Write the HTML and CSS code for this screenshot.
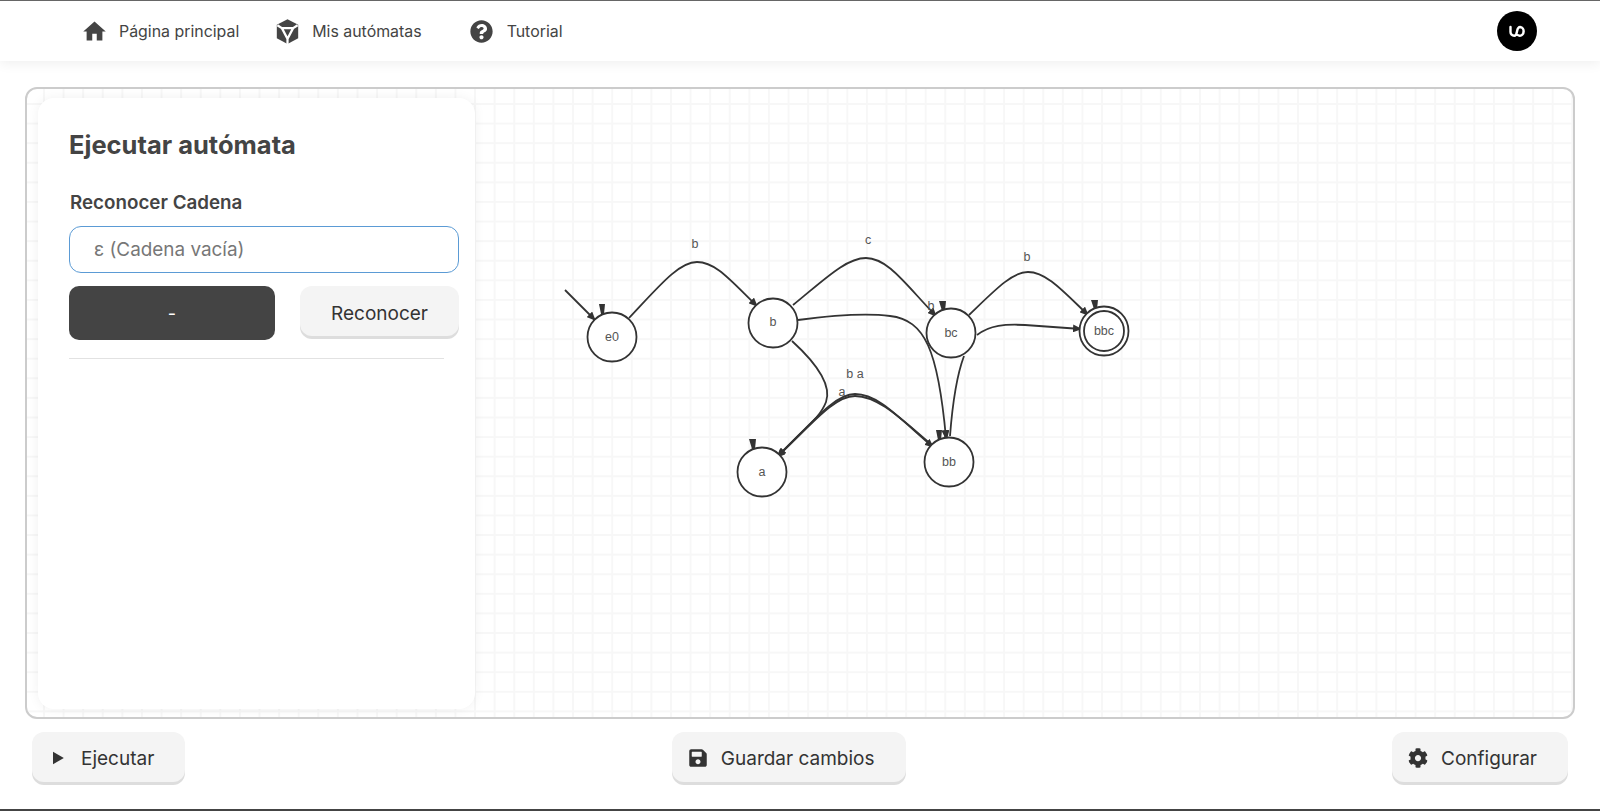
FILE: index.html
```html
<!DOCTYPE html>
<html>
<head>
  <title>Ejecutar autómata</title>
  <link rel="stylesheet" href="styles.css">
</head>
<body>
  <header class="topbar">
    <nav class="nav">
      <a class="nav-item nav-home">
        <svg class="nav-icon" viewBox="0 0 24 24"><path d="M10 20v-6h4v6h5v-8h3L12 3 2 12h3v8z"/></svg>
        Página principal
      </a>
      <a class="nav-item nav-automata">
        <svg class="nav-icon" viewBox="0 0 24 24"><path d="M12 1 21.5 6v12L12 23 2.500 18V6z"/><path class="cut" d="M3 6.500 7 9H17L21 6.500M7 9 12 18.500 17 9M12 18.500V23"/></svg>
        Mis autómatas
      </a>
      <a class="nav-item nav-tutorial">
        <svg class="nav-icon" viewBox="0 0 512 512"><path d="M504 256c0 136.997-111.043 248-248 248S8 392.997 8 256C8 119.083 119.043 8 256 8s248 111.083 248 248zM262.655 90c-54.497 0-89.255 22.957-116.549 63.758-3.536 5.286-2.353 12.415 2.715 16.258l34.699 26.31c5.205 3.947 12.621 3.008 16.665-2.122 17.864-22.658 30.113-35.797 57.303-35.797 20.429 0 45.698 13.148 45.698 32.958 0 14.976-12.363 22.667-32.534 33.976C247.128 238.528 216 254.941 216 296v4c0 6.627 5.373 12 12 12h56c6.627 0 12-5.373 12-12v-1.333c0-28.462 83.186-29.647 83.186-106.667 0-58.002-60.165-102-116.531-102zM256 338c-25.365 0-46 20.635-46 46 0 25.364 20.635 46 46 46s46-20.636 46-46c0-25.365-20.635-46-46-46z"/></svg>
        Tutorial
      </a>
    </nav>
    <div class="avatar">
      <svg viewBox="0 0 24 24"><path d="M5.500 8v5a3.700 3.700 0 0 0 3.700 3.700c1.800 0 2.300-1.200 2.800-4.200s1.200-4.500 3.200-4.500a3.800 3.800 0 0 1 3.300 4.700 3.700 3.700 0 0 1-6 3.200"/></svg>
    </div>
  </header>

  <main class="workspace">
    <section class="panel">
      <h2>Ejecutar autómata</h2>
      <label class="field-label" for="cadena">Reconocer Cadena</label>
      <input class="field-input" id="cadena" type="text" placeholder="ε (Cadena vacía)">
      <div class="panel-actions">
        <button class="btn-dark">-</button>
        <button class="btn btn-recognize">Reconocer</button>
      </div>
      <hr class="divider">
    </section>

    <svg class="graph" viewBox="0 0 1600 811">
      <defs>
        <marker id="arrow" markerWidth="9" markerHeight="8" refX="8" refY="4" orient="auto" markerUnits="userSpaceOnUse">
          <path d="M0 0 9 4 0 8z" fill="#333"/>
        </marker>
      </defs>

      <g class="edges">
        <path marker-end="url(#arrow)" d="M565 290 595 320"/>
        <path marker-end="url(#arrow)" d="M629 318C660 285 679 262 697 262C716 262 731 281 757 306"/>
        <path marker-end="url(#arrow)" d="M793 305C825 279 846 258 866 258C888 258 906 285 936 316"/>
        <path marker-end="url(#arrow)" d="M798 320C835 315 868 313 890 316C925 320 938 350 946 438"/>
        <path marker-end="url(#arrow)" d="M792 341C815 362 832 385 826 402C820 418 805 428 778 456"/>
        <path marker-end="url(#arrow)" d="M778 456C810 425 834 394 855 394C878 394 898 417 933 447"/>
        <path marker-end="url(#arrow)" d="M933 446C900 418 878 396 855 396C834 396 812 424 777 457"/>
        <path d="M964 356C955 380 952 410 950 436"/>
        <path marker-end="url(#arrow)" d="M969 315C995 290 1012 272 1028 272C1046 272 1062 290 1088 315"/>
        <path marker-end="url(#arrow)" d="M977 335C990 325 1005 324 1025 325L1081 329"/>
      </g>

      <g class="flags">
        <path d="M599 304H605L604 314H601z"/>
        <path d="M749 439H756L755 449H752z"/>
        <path d="M939 301H946L945 311H942z"/>
        <path d="M1091 300H1098L1097 309H1094z"/>
        <path d="M936 430H942L941 440H938z"/>
        <path d="M943 431H949L947 440H945z"/>
      </g>

      <g class="nodes">
        <circle cx="612" cy="337" r="24.500"/>
        <circle cx="773" cy="323" r="24.500"/>
        <circle cx="762" cy="472" r="24.500"/>
        <circle cx="951" cy="333" r="24.500"/>
        <circle cx="949" cy="462" r="24.500"/>
        <circle cx="1104" cy="331" r="24.500"/>
        <circle cx="1104" cy="331" r="20"/>
      </g>

      <g class="labels">
        <text x="612" y="341">e0</text>
        <text x="773" y="326">b</text>
        <text x="762" y="476">a</text>
        <text x="951" y="337">bc</text>
        <text x="949" y="466">bb</text>
        <text x="1104" y="335">bbc</text>
        <text x="695" y="248">b</text>
        <text x="868" y="244">c</text>
        <text x="1027" y="261">b</text>
        <text x="931" y="310">b</text>
        <text x="855" y="378">b a</text>
        <text x="842" y="396">a</text>
      </g>
    </svg>
  </main>

  <footer class="toolbar">
    <button class="btn btn-tool">
      <svg class="tool-icon" viewBox="0 0 24 24"><path d="M6 4.500v15L19 12z"/></svg>
      Ejecutar
    </button>
    <button class="btn btn-tool">
      <svg class="tool-icon" viewBox="0 0 448 512"><path d="M433.941 129.941l-83.882-83.882A48 48 0 0 0 316.118 32H48C21.49 32 0 53.49 0 80v352c0 26.51 21.49 48 48 48h352c26.51 0 48-21.49 48-48V163.882a48 48 0 0 0-14.059-33.941zM224 416c-35.346 0-64-28.654-64-64 0-35.346 28.654-64 64-64s64 28.654 64 64c0 35.346-28.654 64-64 64zm96-304.520V212c0 6.627-5.373 12-12 12H76c-6.627 0-12-5.373-12-12V108c0-6.627 5.373-12 12-12h228.520c3.183 0 6.235 1.264 8.485 3.515l3.480 3.480A11.996 11.996 0 0 1 320 111.480z"/></svg>
      Guardar cambios
    </button>
    <button class="btn btn-tool">
      <svg class="tool-icon" viewBox="0 0 512 512"><path d="M487.4 315.7l-42.6-24.6c4.3-23.2 4.3-47 0-70.2l42.6-24.6c4.9-2.8 7.1-8.6 5.500-14-11.100-35.600-30-67.800-54.700-94.600-3.800-4.100-10-5.100-14.800-2.300L380.800 110c-17.900-15.400-38.500-27.300-60.800-35.100V25.800c0-5.600-3.900-10.500-9.400-11.700-36.700-8.200-74.300-7.800-109.200 0-5.500 1.200-9.400 6.100-9.400 11.700V75c-22.200 7.900-42.800 19.800-60.800 35.100L88.700 85.500c-4.900-2.800-11-1.900-14.800 2.300-24.700 26.700-43.600 58.900-54.700 94.600-1.700 5.400.6 11.200 5.500 14L67.300 221c-4.300 23.200-4.300 47 0 70.200l-42.600 24.600c-4.900 2.800-7.100 8.600-5.500 14 11.100 35.600 30 67.800 54.700 94.600 3.800 4.100 10 5.100 14.800 2.300l42.600-24.600c17.900 15.400 38.500 27.300 60.800 35.100v49.200c0 5.600 3.900 10.500 9.400 11.700 36.700 8.200 74.300 7.800 109.200 0 5.500-1.200 9.400-6.100 9.400-11.700v-49.200c22.200-7.900 42.800-19.800 60.800-35.100l42.600 24.600c4.900 2.800 11 1.900 14.800-2.300 24.700-26.700 43.600-58.900 54.700-94.600 1.500-5.500-.7-11.300-5.600-14.100zM256 336c-44.100 0-80-35.900-80-80s35.900-80 80-80 80 35.900 80 80-35.900 80-80 80z"/></svg>
      Configurar
    </button>
  </footer>
</body>
</html>
```

FILE: styles.css
```css
* {
  box-sizing: border-box;
}
html, body {
  height: 100%;
}
body {
  margin: 0;
  height: 811px;
  overflow: hidden;
  display: flex;
  flex-direction: column;
  background: #fff;
  color: #444;
  font-family: Inter, 'Liberation Sans', sans-serif;
  border-top: 1px solid #666;
  border-bottom: 2px solid #444;
}
.topbar {
  height: 60px;
  flex: none;
  display: flex;
  align-items: center;
  justify-content: space-between;
  padding: 0 63px 0 81px;
  background: #fff;
  box-shadow: 0 2px 12px rgba(0, 0, 0, 0.07);
}
.nav {
  display: flex;
  align-items: center;
}
.nav-item {
  display: flex;
  align-items: center;
  gap: 11px;
  font-size: 15.900px;
  color: #444;
}
.nav-automata {
  margin-left: 35px;
}
.nav-tutorial {
  margin-left: 48px;
  gap: 14px;
}
.nav-icon {
  width: 27px;
  height: 27px;
  fill: #444;
}
.nav-tutorial .nav-icon {
  width: 23px;
  height: 23px;
}
.nav-icon .cut {
  fill: none;
  stroke: #fff;
  stroke-width: 2;
}
.avatar {
  width: 40px;
  height: 40px;
  border-radius: 50%;
  background: #000;
  display: flex;
  align-items: center;
  justify-content: center;
}
.avatar svg {
  width: 24px;
  height: 24px;
  fill: none;
  stroke: #fff;
  stroke-width: 2.400;
  stroke-linecap: round;
}

.workspace {
  position: relative;
  margin: 26px 25px 0;
  height: 632px;
  flex: none;
  padding: 9px 11px 8px;
  border: 2px solid #ccc;
  border-radius: 12px;
  background-color: #fff;
  background-image:
    linear-gradient(to right, #f7f7f7 1.5px, transparent 1.5px),
    linear-gradient(to bottom, #f7f7f7 1.5px, transparent 1.5px);
  background-size: 19.6px 19.6px;
  background-position: 16px 14px;
}
.panel {
  position: relative;
  z-index: 1;
  width: 437px;
  height: 100%;
  padding: 32px 31px;
  background: #fff;
  border-radius: 16px;
  box-shadow: 0 0 12px rgba(0, 0, 0, 0.06);
}
.panel h2 {
  margin: 0 0 31px;
  font-size: 25.500px;
  line-height: 30px;
  font-weight: 700;
  color: #444;
}
.field-label {
  display: block;
  margin: 0 0 11px 1px;
  font-size: 18.800px;
  line-height: 24px;
  font-weight: 600;
  color: #444;
}
.field-input {
  display: block;
  width: 390px;
  height: 47px;
  padding: 0 24px;
  border: 1.500px solid #5b9bd5;
  border-radius: 12px;
  font-family: inherit;
  font-size: 18.900px;
  color: #444;
  outline: none;
}
.field-input::placeholder {
  color: #777;
}
.panel-actions {
  display: flex;
  justify-content: space-between;
  width: 390px;
  margin-top: 13px;
}
.btn-dark {
  width: 206px;
  height: 54px;
  border: none;
  border-radius: 10px;
  background: #444;
  color: #fff;
  font-family: inherit;
  font-size: 18px;
}
.btn {
  display: flex;
  align-items: center;
  justify-content: center;
  border: none;
  border-radius: 12px;
  background: #f4f4f4;
  box-shadow: 0 3px 0 #ddd;
  color: #333;
  font-family: inherit;
  font-size: 19px;
}
.btn-recognize {
  width: 159px;
  height: 50px;
  padding-top: 6px;
}
.divider {
  width: 375px;
  margin: 18px 0 0;
  border: none;
  border-top: 1px solid #e2e2e2;
}

.graph {
  position: absolute;
  left: -27px;
  top: -89px;
  width: 1600px;
  height: 811px;
}
.edges path {
  fill: none;
  stroke: #333;
  stroke-width: 1.800;
}
.flags path {
  fill: #333;
}
.nodes circle {
  fill: #fff;
  stroke: #333;
  stroke-width: 1.800;
}
.labels text {
  font-family: 'Liberation Sans', sans-serif;
  font-size: 12.500px;
  fill: #555;
  text-anchor: middle;
}

.toolbar {
  display: flex;
  justify-content: space-between;
  padding: 13px 32px 0;
}
.btn-tool {
  height: 50px;
  padding: 2px 31px 0 16px;
  gap: 13px;
}
.tool-icon {
  width: 20px;
  height: 20px;
  fill: #333;
}
```
